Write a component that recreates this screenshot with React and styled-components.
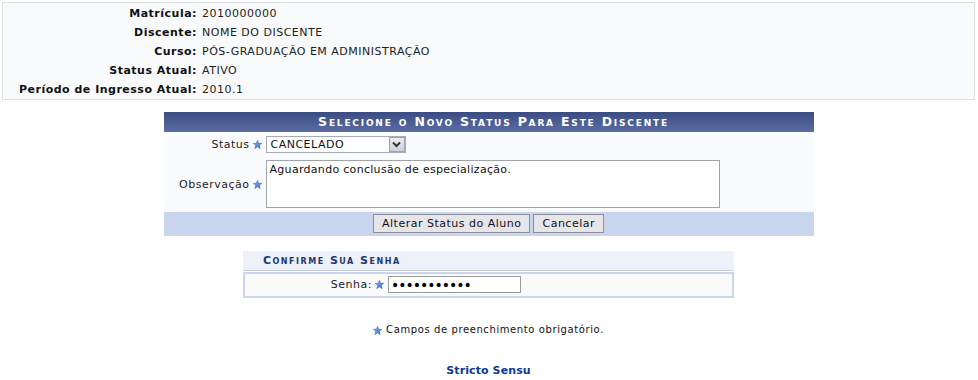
import React from "react";
import styled, { createGlobalStyle } from "styled-components";

const GlobalStyle = createGlobalStyle`
  body {
    margin: 0;
    background: #fff;
    font-family: "DejaVu Sans", Verdana, sans-serif;
    font-size: 11px;
    letter-spacing: 0.5px;
    color: #222;
  }
`;

const Page = styled.div`
  padding: 2px 3px 0 2px;
`;

const InfoBox = styled.div`
  display: grid;
  grid-template-columns: 194px 1fr;
  column-gap: 5px;
  grid-auto-rows: 19px;
  padding-top: 1px;
  border: 1px solid #dcdfe4;
  background: #f9fafc;
  line-height: 19px;
`;

const InfoLabel = styled.div`
  text-align: right;
  font-weight: bold;
  color: #111;
`;

const InfoValue = styled.div`
  color: #222;
`;

const FormTable = styled.div`
  width: 650px;
  margin: 12px auto 0;
  background: #f9fbfd;
`;

const Caption = styled.div`
  height: 20px;
  line-height: 20px;
  padding-left: 10px;
  background: linear-gradient(#3b4c82, #5b6da3);
  color: #fff;
  text-align: center;
  font-size: 12.5px;
  font-weight: bold;
  font-variant: small-caps;
  letter-spacing: 1.8px;
`;

const FieldRow = styled.div`
  display: grid;
  grid-template-columns: 102px 1fr;
  align-items: center;
  padding: ${(p) => p.$pad || "4px 0"};
`;

const FieldLabel = styled.div`
  display: flex;
  justify-content: flex-end;
  align-items: center;
  gap: 3px;
  padding-right: 4px;
  color: #222;
`;

const SelectWrap = styled.div`
  position: relative;
  width: 140px;
  height: 17px;
`;

const Select = styled.div`
  box-sizing: border-box;
  width: 100%;
  height: 100%;
  border: 1px solid #a5acb5;
  background: #fff;
  padding-left: 4px;
  line-height: 15px;
  color: #111;
`;

const Arrow = styled.span`
  position: absolute;
  top: 1px;
  right: 1px;
  width: 16px;
  height: 15px;
  box-sizing: border-box;
  border: 1px solid #a3a3b8;
  background: linear-gradient(#ececf2, #cfd0dc);
  display: flex;
  align-items: center;
  justify-content: center;
`;

const TextArea = styled.div`
  box-sizing: border-box;
  width: 454px;
  height: 48px;
  border: 1px solid #a0a4aa;
  background: #fff;
  padding: 2px 3px;
  line-height: 14px;
  letter-spacing: 0.3px;
  color: #111;
`;

const ButtonBar = styled.div`
  display: flex;
  justify-content: center;
  gap: 3px;
  padding: 2px 0 3px;
  background: #c8d5ec;
`;

const Button = styled.button`
  height: 19px;
  padding: 0 8px;
  font-family: inherit;
  font-size: 11px;
  letter-spacing: 0.5px;
  color: #111;
  background: #e5e5ea;
  border: 1px solid #8e8e96;
  border-radius: 0;
`;

const Confirm = styled.div`
  width: 491px;
  margin: 15px auto 0;
`;

const ConfirmHeader = styled.div`
  height: 19px;
  line-height: 19px;
  padding-left: 20px;
  background: #edf1f9;
  border-bottom: 1px solid #c6cfe2;
  margin-bottom: 1px;
  color: #1f3670;
  font-weight: bold;
  font-variant: small-caps;
  letter-spacing: 1.5px;
`;

const ConfirmRow = styled.div`
  display: grid;
  grid-template-columns: 143px 1fr;
  align-items: center;
  border: 2px solid #cbd6ec;
  background: #fafafa;
  padding: 2px 0 3px;
`;

const PasswordInput = styled.input`
  box-sizing: border-box;
  width: 133px;
  height: 17px;
  border: 1px solid #9a9a9a;
  background: #fff;
  padding: 0 2px;
  font-family: "DejaVu Sans", sans-serif;
  font-size: 14px;
  letter-spacing: -1px;
  color: #000;
  outline: none;
`;

const Note = styled.div`
  display: flex;
  justify-content: center;
  align-items: center;
  gap: 4px;
  margin-top: 25px;
  font-size: 10px;
  letter-spacing: 0.6px;
  line-height: 14px;
  color: #111;
`;

const FooterLink = styled.a`
  display: block;
  margin-top: 27px;
  text-align: center;
  font-weight: bold;
  letter-spacing: 0.1px;
  color: #0c3a94;
  text-decoration: none;
  line-height: 14px;
`;

function Star() {
  return (
    <svg width="9" height="9" viewBox="0 0 10 10">
      <defs>
        <linearGradient id="sg" x1="0" y1="0" x2="1" y2="1">
          <stop offset="0" stopColor="#9cc0ff" />
          <stop offset="1" stopColor="#2a5fc8" />
        </linearGradient>
      </defs>
      <polygon
        points="5,0.3 6.3,3.6 9.8,3.7 7.1,5.9 8,9.6 5,7.6 2,9.6 2.9,5.9 0.2,3.7 3.7,3.6"
        fill="url(#sg)"
        stroke="#2c57b0"
        strokeWidth="0.5"
      />
    </svg>
  );
}

function Chevron() {
  return (
    <svg width="9" height="7" viewBox="0 0 9 7">
      <polyline points="1,1.5 4.5,5 8,1.5" fill="none" stroke="#333" strokeWidth="2" />
    </svg>
  );
}

const info = [
  ["Matrícula:", "2010000000"],
  ["Discente:", "NOME DO DISCENTE"],
  ["Curso:", "PÓS-GRADUAÇÃO EM ADMINISTRAÇÃO"],
  ["Status Atual:", "ATIVO"],
  ["Período de Ingresso Atual:", "2010.1"],
];

export default function App() {
  return (
    <Page>
      <GlobalStyle />
      <InfoBox>
        {info.map(([l, v]) => (
          <React.Fragment key={l}>
            <InfoLabel>{l}</InfoLabel>
            <InfoValue>{v}</InfoValue>
          </React.Fragment>
        ))}
      </InfoBox>

      <FormTable>
        <Caption>Selecione o Novo Status Para Este Discente</Caption>
        <FieldRow>
          <FieldLabel>
            Status <Star />
          </FieldLabel>
          <SelectWrap>
            <Select>CANCELADO</Select>
            <Arrow>
              <Chevron />
            </Arrow>
          </SelectWrap>
        </FieldRow>
        <FieldRow $pad="3px 0 4px">
          <FieldLabel>
            Observação <Star />
          </FieldLabel>
          <TextArea>Aguardando conclusão de especialização.</TextArea>
        </FieldRow>
        <ButtonBar>
          <Button>Alterar Status do Aluno</Button>
          <Button>Cancelar</Button>
        </ButtonBar>
      </FormTable>

      <Confirm>
        <ConfirmHeader>Confirme Sua Senha</ConfirmHeader>
        <ConfirmRow>
          <FieldLabel>
            Senha: <Star />
          </FieldLabel>
          <PasswordInput type="password" value="12345678901" readOnly />
        </ConfirmRow>
      </Confirm>

      <Note>
        <Star />
        Campos de preenchimento obrigatório.
      </Note>
      <FooterLink href="#">Stricto Sensu</FooterLink>
    </Page>
  );
}
